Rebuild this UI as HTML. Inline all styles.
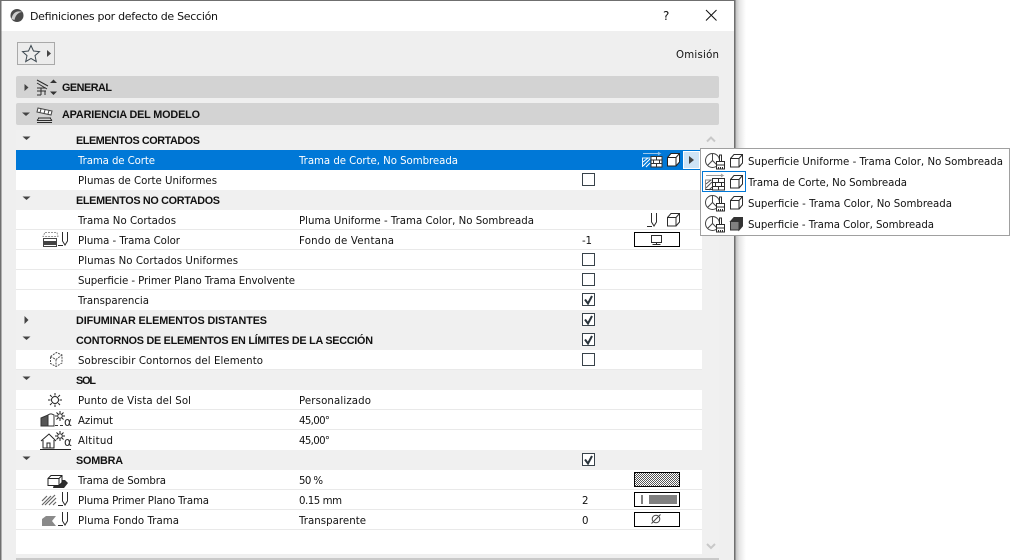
<!DOCTYPE html>
<html><head><meta charset="utf-8"><style>
html,body{margin:0;padding:0;background:#fff;width:1010px;height:560px;overflow:hidden}
svg{display:block}
text{font-family:"DejaVu Sans","Liberation Sans",sans-serif;font-size:10.2px;fill:#111}
.b{font-family:"Liberation Sans",sans-serif;font-weight:bold;font-size:10.8px}
.w{fill:#fff}
.ic{fill:none;stroke:#2c2c2c;stroke-width:1}
.cb{fill:#fff;stroke:#38424a;stroke-width:1}
.ck{fill:none;stroke:#2a343c;stroke-width:2}
.sw{fill:#fff;stroke:#000;stroke-width:1}
.sep{stroke:#e9e9e9;stroke-width:1}
</style></head><body>
<svg width="1010" height="560" viewBox="0 0 1010 560" xmlns="http://www.w3.org/2000/svg">
<defs>
<linearGradient id="sh" x1="0" x2="1" y1="0" y2="0"><stop offset="0" stop-color="#bbb"/><stop offset=".4" stop-color="#e6e6e6"/><stop offset="1" stop-color="#fff"/></linearGradient>
<pattern id="chk" width="2" height="2" patternUnits="userSpaceOnUse"><rect width="2" height="2" fill="#fff"/><rect width="1" height="1" fill="#555"/><rect x="1" y="1" width="1" height="1" fill="#555"/></pattern>
<g id="cube"><path class="ic" d="M.5 4.500h8.500v8.500h-8.500zM.5 4.500l3.500-4h8.500v8.500l-3.500 4M9 4.500l3.500-4"/></g>
<g id="pen"><path class="ic" d="M4.500 0v9l2.500 4 2.500-4v-9M0 13.500h5"/></g>
<g id="brush"><circle cx="7.500" cy="7.500" r="7" fill="none" stroke="#444"/><path d="M7.500 .5v7l-5 5M7.500 7.500l5 5" fill="none" stroke="#444"/><path d="M11.500 8.500h8v7.500h-8z" fill="#fff" stroke="#2c2c2c"/><path d="M14.500 8.500v-6.500h2v6.500M11.500 12h8M13.500 14v2M15.500 14v2M17.500 14v2" fill="none" stroke="#2c2c2c"/></g>
<g id="wall"><path d="M1 1.500h17l-2-1.500M18 1.500l-2 1.500" fill="none" stroke="#999"/><path d="M.5 16v-10h7" fill="none" stroke="#888"/><path d="M1 10l5-4M1 14l6-6M4 16l3-3" stroke="#555" fill="none"/><path d="M.5 15.500h7" stroke="#333"/><rect x="7.500" y="4.500" width="12" height="11.500" fill="#fff" stroke="#2c2c2c"/><path class="ic" d="M7.500 8.500h12M7.500 12.500h12M13.500 4.500v4M10.500 8.500v4M16.500 8.500v4M13.500 12.500v3.500"/></g>
</defs>

<!-- window -->
<rect x="735" y="0" width="11" height="560" fill="url(#sh)"/>
<rect x="0" y="0" width="735.500" height="560" fill="#6f6f6f"/>
<rect x="1.500" y="1" width="732.500" height="30" fill="#fff"/>
<rect x="1.500" y="31" width="732.500" height="529" fill="#efefef"/>

<!-- title bar -->
<circle cx="17" cy="15.500" r="6.500" fill="#4a4a4a"/>
<path d="M11.500 19c1-6 5-9 11-7-4 0-7 3-8 8z" fill="#ccc"/>
<text x="30" y="20" textLength="188" lengthAdjust="spacing" style="font-size:11px">Definiciones por defecto de Sección</text>
<text x="663" y="20" style="font-size:12px">?</text>
<path d="M706 10l10.500 10.500M716.500 10l-10.500 10.500" stroke="#111" stroke-width="1" fill="none"/>

<!-- star btn -->
<rect x="17.500" y="42.500" width="37" height="22" fill="#ececec" stroke="#a9a9a9"/>
<path d="M31 45.500l2.500 5.500 6 .6-4.500 4 1.300 6-5.300-3.100-5.300 3.100 1.300-6-4.500-4 6-.6z" fill="none" stroke="#3d4850" stroke-width="1"/>
<path d="M47 50l4 3.500-4 3.500z" fill="#444"/>
<text x="676" y="58" textLength="43" lengthAdjust="spacing">Omisión</text>

<!-- section bars -->
<rect x="16" y="76" width="703" height="22" rx="2" fill="#d3d3d3"/>
<rect x="16" y="103" width="703" height="22" rx="2" fill="#d3d3d3"/>
<path d="M24.500 84l4 3.500-4 3.500z" fill="#444"/>
<path d="M22 112.500h8l-4 3.500z" fill="#444"/>
<path class="ic" d="M37 80l11 6M37 83l10 6M37 88h9M37 91h9M41 88v7M37 95h4M45 91v4" />
<path d="M50 83l3.500-3.500 3.500 3.500zM50 91.500h7l-3.500 3.500z" fill="#333"/>
<text class="b" x="62" y="91" textLength="50" lengthAdjust="spacing">GENERAL</text>
<path d="M38 108l14 3-1 4-14-3z" fill="#fff" stroke="#444"/><path d="M41 109l-1 3.500M45 110l-1 3.500M49 110.500l-1 3.500" stroke="#444"/>
<path class="ic" d="M38 118h13M37 120.500h15M37 122.500h15M39 118l-2 2.500M50 118l2 2.500"/>
<text class="b" x="62" y="118" textLength="138" lengthAdjust="spacing">APARIENCIA DEL MODELO</text>

<!-- list -->
<rect x="16" y="130" width="686" height="424" fill="#fff"/>
<rect x="702" y="130" width="17" height="424" fill="#f0f0f0"/>
<rect x="16" y="558" width="703" height="2" fill="#c9c9c9"/>

<rect x="16" y="130" width="686" height="20" fill="#f0f0f0"/>
<rect x="16" y="190" width="686" height="20" fill="#f0f0f0"/>
<rect x="16" y="310" width="686" height="40" fill="#f0f0f0"/>
<rect x="16" y="370" width="686" height="20" fill="#f0f0f0"/>
<rect x="16" y="450" width="686" height="20" fill="#f0f0f0"/>
<rect x="16" y="150" width="686" height="20" fill="#0078d7"/>

<path class="sep" d="M16 229.500h686M16 249.500h686M16 269.500h686M16 289.500h686M16 369.500h686M16 409.500h686M16 429.500h686M16 489.500h686M16 509.500h686M16 529.500h686"/>

<path d="M22.500 136.500h8l-4 3.500z" fill="#444"/>
<path d="M22.500 196.500h8l-4 3.500z" fill="#444"/>
<path d="M24.500 316l4 4-4 4z" fill="#444"/>
<path d="M22.500 336.500h8l-4 3.500z" fill="#444"/>
<path d="M22.500 376.500h8l-4 3.500z" fill="#444"/>
<path d="M22.500 456.500h8l-4 3.500z" fill="#444"/>

<text class="b" x="76" y="144" textLength="124" lengthAdjust="spacing">ELEMENTOS CORTADOS</text>
<text class="w" x="78" y="164" textLength="77" lengthAdjust="spacing">Trama de Corte</text>
<text class="w" x="299" y="164" textLength="159" lengthAdjust="spacing">Trama de Corte, No Sombreada</text>
<text x="78" y="184" textLength="139" lengthAdjust="spacing">Plumas de Corte Uniformes</text>
<text class="b" x="76" y="204" textLength="144" lengthAdjust="spacing">ELEMENTOS NO CORTADOS</text>
<text x="78" y="224" textLength="98" lengthAdjust="spacing">Trama No Cortados</text>
<text x="299" y="224" textLength="235" lengthAdjust="spacing">Pluma Uniforme - Trama Color, No Sombreada</text>
<text x="78" y="244" textLength="102" lengthAdjust="spacing">Pluma - Trama Color</text>
<text x="299" y="244" textLength="95" lengthAdjust="spacing">Fondo de Ventana</text>
<text x="582" y="244" textLength="10" lengthAdjust="spacing">-1</text>
<text x="78" y="264" textLength="160" lengthAdjust="spacing">Plumas No Cortados Uniformes</text>
<text x="78" y="284" textLength="217" lengthAdjust="spacing">Superficie - Primer Plano Trama Envolvente</text>
<text x="78" y="304" textLength="71" lengthAdjust="spacing">Transparencia</text>
<text class="b" x="76" y="324" textLength="191" lengthAdjust="spacing">DIFUMINAR ELEMENTOS DISTANTES</text>
<text class="b" x="76" y="344" textLength="297" lengthAdjust="spacing">CONTORNOS DE ELEMENTOS EN LÍMITES DE LA SECCIÓN</text>
<text x="78" y="364" textLength="185" lengthAdjust="spacing">Sobrescibir Contornos del Elemento</text>
<text class="b" x="76" y="384" textLength="20" lengthAdjust="spacing">SOL</text>
<text x="78" y="404" textLength="113" lengthAdjust="spacing">Punto de Vista del Sol</text>
<text x="299" y="404" textLength="72" lengthAdjust="spacing">Personalizado</text>
<text x="78" y="424" textLength="35" lengthAdjust="spacing">Azimut</text>
<text x="299" y="424" textLength="31" lengthAdjust="spacing">45,00°</text>
<text x="78" y="444" textLength="35" lengthAdjust="spacing">Altitud</text>
<text x="299" y="444" textLength="31" lengthAdjust="spacing">45,00°</text>
<text class="b" x="76" y="464" textLength="47" lengthAdjust="spacing">SOMBRA</text>
<text x="78" y="484" textLength="88" lengthAdjust="spacing">Trama de Sombra</text>
<text x="299" y="484" textLength="24" lengthAdjust="spacing">50 %</text>
<text x="78" y="504" textLength="131" lengthAdjust="spacing">Pluma Primer Plano Trama</text>
<text x="299" y="504" textLength="43" lengthAdjust="spacing">0.15 mm</text>
<text x="582" y="504">2</text>
<text x="78" y="524" textLength="101" lengthAdjust="spacing">Pluma Fondo Trama</text>
<text x="299" y="524" textLength="67" lengthAdjust="spacing">Transparente</text>
<text x="582" y="524">0</text>

<!-- checkboxes -->
<rect class="cb" x="582.500" y="173.500" width="12" height="12"/>
<rect class="cb" x="582.500" y="253.500" width="12" height="12"/>
<rect class="cb" x="582.500" y="273.500" width="12" height="12"/>
<rect class="cb" x="582.500" y="293.500" width="12" height="12"/><path class="ck" d="M585 299.500l3 4 4-7.500"/>
<rect class="cb" x="582.500" y="313.500" width="12" height="12"/><path class="ck" d="M585 319.500l3 4 4-7.500"/>
<rect class="cb" x="582.500" y="333.500" width="12" height="12"/><path class="ck" d="M585 339.500l3 4 4-7.500"/>
<rect class="cb" x="582.500" y="353.500" width="12" height="12"/>
<rect class="cb" x="582.500" y="453.500" width="12" height="12"/><path class="ck" d="M585 459.500l3 4 4-7.500"/>

<!-- swatches -->
<rect class="sw" x="634.500" y="232.500" width="45" height="14"/>
<path class="ic" d="M651.500 235.500h10v7h-10zM656.500 242.500v2M652.500 244.500h8"/>
<rect x="634.500" y="472.500" width="45" height="14" fill="url(#chk)" stroke="#000"/>
<rect class="sw" x="634.500" y="492.500" width="45" height="14"/>
<rect x="641" y="495" width="2" height="9" fill="#808080"/><rect x="649" y="495" width="28" height="9" fill="#808080"/>
<rect class="sw" x="634.500" y="512.500" width="45" height="14"/>
<circle cx="656" cy="519" r="3.800" fill="none" stroke="#444"/><path d="M651.500 523.500l9-9" stroke="#444"/>

<!-- selected row icons -->
<g transform="translate(642,152)"><path d="M1 1.500h17l-2-1.500M18 1.500l-2 1.500" fill="none" stroke="#9cc7ec"/><path d="M.5 15v-9h8" fill="none" stroke="#e8f1fa"/><path d="M1 10l5-4M1 14l7-7M4 15l4-4" stroke="#fff"/><rect x="9" y="4.500" width="11" height="10.500" fill="#fff" stroke="#333"/><path d="M9 8h11M9 11.500h11M14.500 4.500v3.500M11.500 8v3.500M17.500 8v3.500M14.500 11.500v3.500" stroke="#333" fill="none"/></g>
<g transform="translate(667,153)"><path d="M.5 4.500l3.500-4h8.500v8.500l-3.500 4h-8.500z" fill="#fff" stroke="#222"/><path d="M.5 4.500h8.500v8.500M9 4.500l3.500-4" fill="none" stroke="#222"/></g>
<rect x="683.500" y="151.500" width="16" height="17" fill="#cfe4f6" stroke="#fff"/>
<path d="M689 156l5 4-5 4z" fill="#444"/>

<!-- row icons -->
<use href="#pen" x="647" y="213"/>
<use href="#cube" x="667" y="213"/>
<g transform="translate(42,232)"><path d="M3 .5h12l1 4H1z" fill="none" stroke="#999" stroke-dasharray="2 1"/><path d="M1.500 6.500h13v3h-13z" fill="#fff" stroke="#444"/><rect x="1" y="9" width="14" height="3" fill="#444"/><path d="M1.500 12.500h13v2h-13z" fill="#fff" stroke="#444"/></g>
<use href="#pen" x="58" y="232"/>
<g transform="translate(50,352)"><path d="M.5 4.500l6-4 5.500 2.500v8l-6 3.500-5.500-3zM.5 4.500l5.500 3 6-4.500M6 7.500v7.500" fill="none" stroke="#555" stroke-dasharray="2 1"/></g>
<!-- sun -->
<g transform="translate(55,400)" stroke="#222" fill="none"><circle r="3.500"/><path d="M0-7v2.500M0 7v-2.500M-7 0h2.500M7 0h-2.500M-5-5l1.800 1.800M5 5l-1.800-1.800M-5 5l1.800-1.800M5-5l-1.800 1.800"/></g>
<!-- azimut -->
<g transform="translate(40,412)"><path d="M1 6l7-3v11H1z" fill="#555" stroke="#333"/><path d="M8 3c3-2 4-1 6 0v11H8z" fill="#fff" stroke="#333"/></g>
<g transform="translate(60,416)" stroke="#222" fill="none"><circle r="2.300"/><path d="M0-5v2M0 5v-2M-5 0h2M5 0h-2M-3.500-3.500l1.500 1.500M3.500 3.500l-1.500-1.500M-3.500 3.500l1.500-1.500M3.500-3.500l-1.500 1.500"/></g>
<path d="M55 425.500h3M60 425.500h3" stroke="#333"/>
<text x="64" y="426" style="font-size:12px;fill:#333">α</text>
<!-- altitud -->
<g transform="translate(40,434)" fill="none" stroke="#222"><path d="M1 7l8-7 7 7M3 6v8h11V6M7 14V9h3v5M0 15.500h31"/></g>
<g transform="translate(60,436)" stroke="#222" fill="none"><circle r="2.300"/><path d="M0-5v2M0 5v-2M-5 0h2M5 0h-2M-3.500-3.500l1.500 1.500M3.500 3.500l-1.500-1.500M-3.500 3.500l1.500-1.500M3.500-3.500l-1.500 1.500"/></g>
<text x="64" y="446" style="font-size:12px;fill:#333">α</text>
<!-- sombra -->
<g transform="translate(47,474)"><path d="M8 6h8l2 0 3 3-4 5H6z" fill="#2c2c2c"/><path d="M1 4.500h11v7H1z" fill="#fff" stroke="#222"/><path d="M1 4.500l3-3h11v7l-3 3M12 4.500l3-3" fill="#fff" stroke="#222"/><path d="M1 4.500h11v7H1z" fill="#fff" stroke="#222"/></g>
<!-- hatch + pens -->
<path d="M42 505l9-9M45 505l10-10M49 505l7-7M53 505l3-3M42 501l5-5" stroke="#666" stroke-width="1.200" fill="none"/>
<use href="#pen" x="58" y="492"/>
<path d="M42 526v-7l4-3h10l-4 5 4 5z" fill="#8a8a8a"/>
<use href="#pen" x="58" y="512"/>

<!-- scroll arrows -->
<path d="M707 141.500l4-4 4 4" fill="none" stroke="#c8c8c8" stroke-width="2"/>
<path d="M707 544l4 4 4-4" fill="none" stroke="#c8c8c8" stroke-width="2"/>

<!-- popup -->
<rect x="700.500" y="148.500" width="309" height="87" fill="#fff" stroke="#a0a0a0"/>
<use href="#brush" x="705" y="153"/><use href="#cube" x="730" y="154"/>
<text x="748" y="165" textLength="255" lengthAdjust="spacing">Superficie Uniforme - Trama Color, No Sombreada</text>
<rect x="702.500" y="171.500" width="43" height="20" fill="#fff" stroke="#0078d7"/>
<use href="#wall" x="705" y="174"/><use href="#cube" x="730" y="175"/>
<text x="748" y="186" textLength="159" lengthAdjust="spacing">Trama de Corte, No Sombreada</text>
<use href="#brush" x="705" y="195"/><use href="#cube" x="730" y="196"/>
<text x="748" y="207" textLength="204" lengthAdjust="spacing">Superficie - Trama Color, No Sombreada</text>
<use href="#brush" x="705" y="216"/>
<path d="M730.500 221.500h8.500v8.500h-8.500z" fill="#808080" stroke="#333"/><path d="M730.500 221.500l3.500-4h8.500v8.500l-3.500 4v-8.500z" fill="#333" stroke="#333"/>
<text x="748" y="228" textLength="186" lengthAdjust="spacing">Superficie - Trama Color, Sombreada</text>
</svg>
</body></html>
